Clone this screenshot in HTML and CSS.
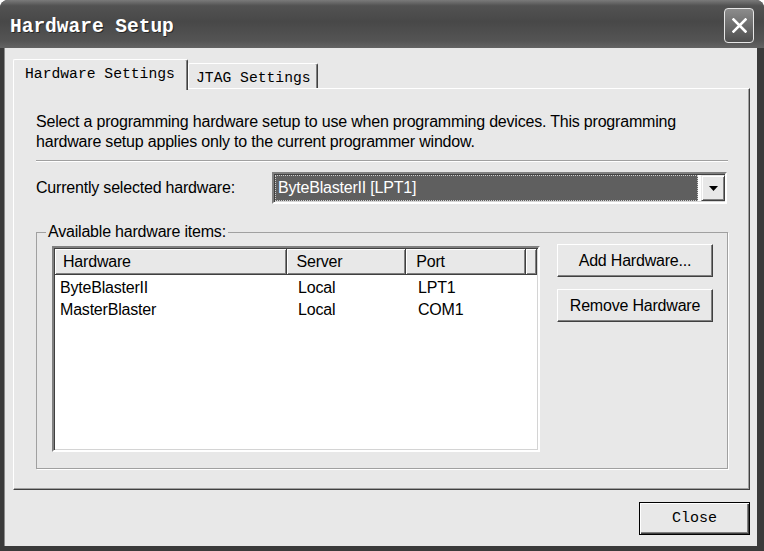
FILE: index.html
```html
<!DOCTYPE html>
<html lang="en">
<head>
  <meta charset="UTF-8">
  <meta name="viewport" content="width=device-width, initial-scale=1.0">
  <title>Hardware Setup</title>
  <link rel="stylesheet" href="styles.css">
</head>
<body>
  <div class="window">
    <div class="titlebar">
      <span class="title">Hardware Setup</span>
      <div class="close-x">
        <svg width="15" height="15" viewBox="0 0 15 15">
          <path d="M1.5 1.5 L13.5 13.5 M13.5 1.5 L1.5 13.5" stroke="#fff" stroke-width="2.6" stroke-linecap="square"/>
        </svg>
      </div>
    </div>

    <div class="client">
      <div class="tabs">
        <div class="tab active">Hardware Settings</div>
        <div class="tab">JTAG Settings</div>
      </div>

      <div class="panel">
        <p class="desc">Select a programming hardware setup to use when programming devices. This programming hardware setup applies only to the current programmer window.</p>
        <div class="separator"></div>

        <div class="combo-row">
          <span class="combo-label">Currently selected hardware:</span>
          <div class="combo">
            <div class="combo-value">ByteBlasterII [LPT1]</div>
            <div class="combo-btn">
              <svg width="9" height="5" viewBox="0 0 9 5"><polygon points="0,0 9,0 4.5,5" fill="#000"/></svg>
            </div>
          </div>
        </div>

        <fieldset class="group">
          <legend>Available hardware items:</legend>
          <div class="group-body">
            <div class="list">
              <div class="list-head">
                <div class="col col-hw">Hardware</div>
                <div class="col col-srv">Server</div>
                <div class="col col-port">Port</div>
                <div class="col col-fill"></div>
              </div>
              <div class="list-rows">
                <div class="row">
                  <span class="cell cell-hw">ByteBlasterII</span>
                  <span class="cell cell-srv">Local</span>
                  <span class="cell cell-port">LPT1</span>
                </div>
                <div class="row">
                  <span class="cell cell-hw">MasterBlaster</span>
                  <span class="cell cell-srv">Local</span>
                  <span class="cell cell-port">COM1</span>
                </div>
              </div>
            </div>
            <div class="side-buttons">
              <button class="btn">Add Hardware...</button>
              <button class="btn">Remove Hardware</button>
            </div>
          </div>
        </fieldset>
      </div>

      <div class="footer">
        <button class="btn btn-default">Close</button>
      </div>
    </div>
  </div>
</body>
</html>
```

FILE: styles.css
```css
* {
  box-sizing: border-box;
}
body {
  margin: 0;
  background: #fff;
  font-family: "Liberation Sans", Arial, sans-serif;
  font-size: 16px;
  letter-spacing: -0.2px;
  color: #000;
}
.window {
  width: 764px;
  height: 551px;
  display: flex;
  flex-direction: column;
  background: #3a3a3a;
  border-radius: 8px 8px 0 0;
  overflow: hidden;
}
.titlebar {
  height: 48px;
  flex: none;
  display: flex;
  justify-content: space-between;
  align-items: flex-start;
  padding: 8px 10px 0 10px;
  background: linear-gradient(to bottom, #7a7a7a 0, #525252 12%, #484848 45%, #545454 85%, #636363 100%);
}
.title {
  font-family: "Liberation Mono", monospace;
  font-weight: bold;
  font-size: 19.5px;
  letter-spacing: 0;
  line-height: 35px;
  margin-top: 2px;
  color: #fff;
  text-shadow: 1px 1px 0 #2a2a2a;
}
.close-x {
  width: 30px;
  height: 35px;
  border: 1px solid #e6e6e6;
  border-radius: 4px;
  background: linear-gradient(to bottom, #8c8c8c, #4e4e4e);
  display: flex;
  align-items: center;
  justify-content: center;
}
.client {
  flex: 1;
  margin: 0 7px 5px 4px;
  background: #e8e8e8;
  display: flex;
  flex-direction: column;
  padding: 11px 7px 11px 9px;
  box-shadow: inset 1px 0 #8a8a8a;
}
.tabs {
  display: flex;
  align-items: flex-end;
  height: 29px;
}
.tab {
  font-family: "Liberation Mono", monospace;
  font-size: 14.7px;
  letter-spacing: 0;
  height: 25px;
  width: 130px;
  padding: 3px 0 0 7px;
  background: #e8e8e8;
  border-left: 1px solid #fff;
  border-top: 1px solid #fff;
  border-right: 1px solid #404040;
  box-shadow: inset -1px 0 #808080;
  border-radius: 2px 2px 0 0;
  display: flex;
  align-items: center;
}
.tab.active {
  height: 31px;
  width: 175px;
  padding: 0 0 2px 11px;
  margin-bottom: -2px;
  position: relative;
  z-index: 1;
}
.panel {
  height: 402px;
  border: 1px solid;
  border-color: #fff #404040 #404040 #fff;
  box-shadow: inset -1px -1px #a0a0a0;
  padding: 23px 21px 0 22px;
}
.desc {
  margin: 0;
  line-height: 20px;
}
.separator {
  margin-top: 8px;
  height: 2px;
  border-top: 1px solid #a0a0a0;
  border-bottom: 1px solid #fff;
}
.combo-row {
  margin-top: 10px;
  height: 32px;
  display: flex;
  align-items: center;
}
.combo-label {
  width: 236px;
}
.combo {
  width: 455px;
  height: 32px;
  display: flex;
  gap: 3px;
  padding: 1px 0 1px 1px;
  background: #fff;
  border: 2px solid;
  border-color: #808080 #fff #fff #808080;
  box-shadow: inset 1px 1px #404040, inset -1px -1px #d4d4d4;
}
.combo-value {
  flex: 1;
  background: #5f5f5f;
  color: #fff;
  border: 1px dotted #cfcfcf;
  padding-left: 2px;
  line-height: 24px;
}
.combo-btn {
  width: 24px;
  background: #e8e8e8;
  border: 1px solid;
  border-color: #e8e8e8 #404040 #404040 #e8e8e8;
  box-shadow: inset 1px 1px #fff, inset -1px -1px #808080;
  display: flex;
  align-items: center;
  justify-content: center;
}
.group {
  margin: 18px 0 0 0;
  padding: 0;
  min-width: 0;
  border: 1px solid #a0a0a0;
  box-shadow: 1px 1px 0 #fff;
}
.group legend {
  margin-left: 9px;
  padding: 0 2px;
  line-height: 20px;
}
.group-body {
  display: flex;
  gap: 17px;
  padding: 4px 14px 16px 15px;
}
.list {
  width: 488px;
  height: 206px;
  background: #fff;
  border: 2px solid;
  border-color: #808080 #fff #fff #808080;
  box-shadow: inset 1px 1px #404040, inset -1px -1px #d4d4d4;
  padding: 1px;
}
.list-head {
  display: flex;
  height: 26px;
}
.col {
  background: #e8e8e8;
  border-right: 1px solid #404040;
  border-bottom: 1px solid #404040;
  box-shadow: inset 1px 1px #fff, inset -1px -1px #808080;
  display: flex;
  align-items: center;
  padding-left: 10px;
}
.col-hw {
  width: 232px;
  padding-left: 8px;
}
.col-srv,
.col-port {
  width: 120px;
}
.col-fill {
  flex: 1;
}
.list-rows {
  padding-top: 2px;
}
.row {
  display: flex;
  height: 22px;
  line-height: 22px;
}
.cell-hw {
  width: 232px;
  padding-left: 5px;
}
.cell-srv,
.cell-port {
  width: 120px;
  padding-left: 11px;
}
.side-buttons {
  display: flex;
  flex-direction: column;
  gap: 12px;
  margin-top: -2px;
}
.btn {
  width: 156px;
  height: 33px;
  padding: 0;
  background: #e8e8e8;
  font-family: "Liberation Sans", Arial, sans-serif;
  font-size: 16px;
  letter-spacing: -0.2px;
  color: #000;
  border: 1px solid;
  border-color: #fff #404040 #404040 #fff;
  box-shadow: inset -1px -1px #808080;
}
.footer {
  margin-top: 12px;
  display: flex;
  justify-content: flex-end;
}
.btn-default {
  width: 111px;
  font-family: "Liberation Mono", monospace;
  font-size: 15px;
  letter-spacing: 0;
  border: 1px solid #000;
  box-shadow: inset 1px 1px #fff, inset -1px -1px #404040, inset -2px -2px #808080;
}
```
